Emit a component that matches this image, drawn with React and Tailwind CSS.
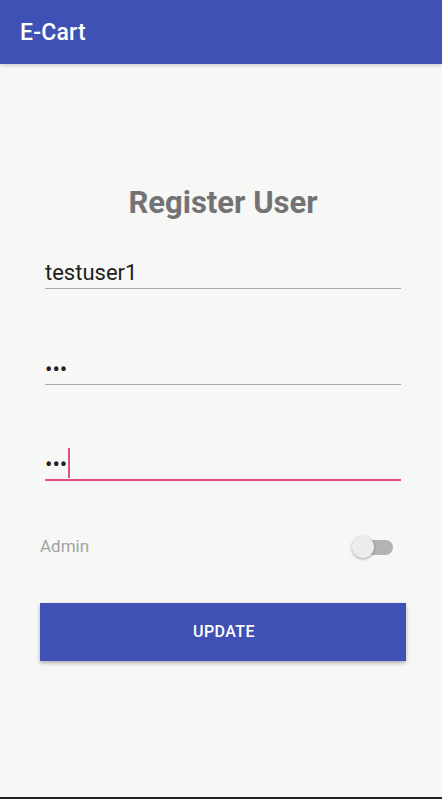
export default function App() {
  return (
    <div className="w-[442px] h-[799px] flex flex-col bg-[#f7f8f6] overflow-hidden" style={{ fontFamily: "Roboto, 'Liberation Sans', sans-serif" }}>
      <div className="h-[64px] bg-[#3f51b5] flex items-center px-[20px] shadow-[0_2px_3px_rgba(0,0,0,0.15)] z-10">
        <span className="text-white text-[23px] font-medium leading-none tracking-[0.2px]">E-Cart</span>
      </div>
      <div className="flex-1 flex flex-col">
        <h1 className="mt-[121px] text-center text-[31px] font-bold text-[#737373] leading-[36px] pl-[4px]">Register User</h1>
        <div className="ml-[45px] mt-[37px] w-[356px]">
          <div className="h-[31px] flex items-end pb-[4px] text-[22px] text-[#212121] leading-none border-b-[1.5px] border-[#a8a8a8]">testuser1</div>
        </div>
        <div className="ml-[45px] mt-[64px] w-[356px]">
          <div className="h-[32px] flex items-center pt-[2px] text-[22px] text-[#212121] border-b-[1.5px] border-[#a8a8a8] leading-none">•••</div>
        </div>
        <div className="ml-[45px] mt-[64px] w-[356px]">
          <div className="h-[32px] flex items-center pt-[2px] text-[22px] text-[#212121] border-b-[2px] border-[#e35183] leading-none">
            <span>•••</span>
            <span className="ml-[1px] w-[2px] h-[30px] bg-[#e35183] mt-[-4px]"></span>
          </div>
        </div>
        <div className="ml-[40px] mr-[40px] mt-[54px] flex items-center justify-between h-[24px]">
          <span className="text-[17px] text-[#a3a3a3]">Admin</span>
          <div className="relative w-[41px] h-[22px] mr-[9px] flex items-center">
            <div className="absolute left-[10px] right-0 h-[15px] rounded-full bg-[#b3b3b3]"></div>
            <div className="absolute left-0 w-[22px] h-[22px] rounded-full bg-[#ececec] shadow-[0_1px_3px_rgba(0,0,0,0.35)]"></div>
          </div>
        </div>
        <button className="ml-[40px] mr-[36px] mt-[44px] h-[58px] bg-[#3f51b5] text-white text-[16px] font-medium tracking-[0.4px] shadow-[0_2px_4px_rgba(0,0,0,0.3)] pl-[2px]">UPDATE</button>
      </div>
      <div className="h-[2px] bg-[#222]"></div>
    </div>
  );
}
